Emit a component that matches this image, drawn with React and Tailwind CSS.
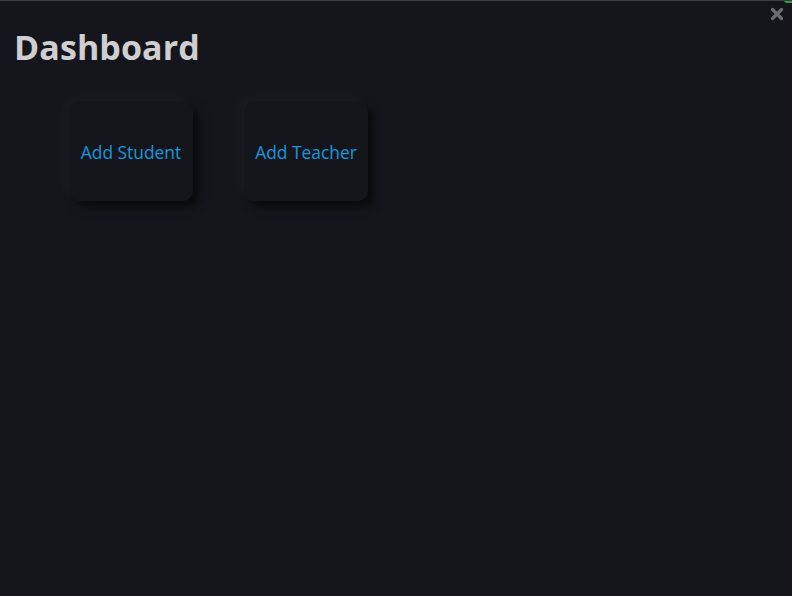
export default function App() {
  return (
    <div
      className="relative h-[596px] w-[792px] overflow-hidden border-t border-[#3b3d42] bg-[#15161b]"
      style={{ fontFamily: "'Open Sans', Lato, sans-serif" }}
    >
      <div className="absolute right-0 top-[-1px] h-[3px] w-[8px] rounded-bl bg-[#3a9a3a]" />
      <button className="absolute right-[8px] top-[6px] text-[#6b6c70]">
        <svg width="14" height="14" viewBox="0 0 14 14">
          <path d="M2.5 2.5 L11.5 11.5 M11.5 2.5 L2.5 11.5" stroke="currentColor" strokeWidth="3.2" strokeLinecap="round" />
        </svg>
      </button>
      <h1 className="ml-[14px] mt-[24px] text-[34px] font-bold leading-[44px] tracking-[0.1px] text-[#cfcfd1]">
        Dashboard
      </h1>
      <div className="ml-[69px] mt-[32px] flex gap-[51px]">
        <div className="flex h-[100px] w-[124px] items-center justify-center rounded-[10px] bg-[#15161b] pt-[2px] text-[17.4px] text-[#1a96de] shadow-[-5px_-5px_12px_rgba(255,255,255,0.03),6px_6px_10px_rgba(0,0,0,0.55)]">
          Add Student
        </div>
        <div className="flex h-[100px] w-[124px] items-center justify-center rounded-[10px] bg-[#15161b] pt-[2px] text-[17.4px] text-[#1a96de] shadow-[-5px_-5px_12px_rgba(255,255,255,0.03),6px_6px_10px_rgba(0,0,0,0.55)]">
          Add Teacher
        </div>
      </div>
    </div>
  );
}
